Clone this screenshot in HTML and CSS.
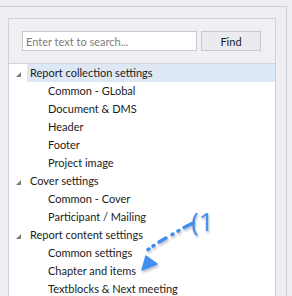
FILE: index.html
```html
<!DOCTYPE html>
<html lang="en">
<head>
    <meta charset="UTF-8">
    <title>Report settings</title>
    <link rel="stylesheet" href="styles.css">
</head>
<body>
    <div class="frame">
        <div class="panel">
            <div class="search-row">
                <input type="text" class="search" placeholder="Enter text to search...">
                <button class="find">Find</button>
            </div>
            <ul class="tree">
                <li class="node selected"><span class="toggle"></span><span class="label">Report collection settings</span></li>
                <li class="leaf">Common - GLobal</li>
                <li class="leaf">Document &amp; DMS</li>
                <li class="leaf">Header</li>
                <li class="leaf">Footer</li>
                <li class="leaf">Project image</li>
                <li class="node"><span class="toggle"></span><span class="label">Cover settings</span></li>
                <li class="leaf">Common - Cover</li>
                <li class="leaf">Participant / Mailing</li>
                <li class="node"><span class="toggle"></span><span class="label">Report content settings</span></li>
                <li class="leaf">Common settings</li>
                <li class="leaf">Chapter and items</li>
                <li class="leaf">Textblocks &amp; Next meeting</li>
            </ul>
        </div>
    </div>

    <!-- callout arrow -->
    <div class="callout">
        <svg width="100" height="80" viewBox="0 0 100 80">
            <defs>
                <filter id="shade" x="-20%" y="-20%" width="140%" height="140%">
                    <feDropShadow dx="1" dy="2" stdDeviation="1.2" flood-color="#000" flood-opacity="0.25"/>
                </filter>
            </defs>
            <g filter="url(#shade)" stroke="#3f8ff0" stroke-width="3.5" stroke-linecap="round" fill="none">
                <path d="M63 23 L54 27.5"/>
                <path d="M49 30.5 L48 31.1"/>
                <path d="M43 34 L42 34.6"/>
                <path d="M36 38 L29 42"/>
                <path d="M24 45.5 L23 46.1"/>
                <path d="M19 49 L18 49.6"/>
                <path d="M16 56 L12 70 L27 64 Z" fill="#3f8ff0" stroke-width="1.5" stroke-linejoin="round"/>
            </g>
        </svg>
        <span class="tag">(1</span>
    </div>
</body>
</html>
```

FILE: styles.css
```css
body {
    margin: 0;
    background-color: #efeef3;
    font-family: Lato, "Noto Sans", Arial, sans-serif;
    font-size: 11px;
    color: #1b1b1b;
    overflow: hidden;
    height: 296px;
}
.frame {
    margin-top: 6px;
    width: 287px;
    height: 300px;
    border-top: 1px solid #cfcfd8;
    border-right: 1px solid #cfcfd8;
    padding: 11px 0 0 8px;
    box-sizing: border-box;
}
.panel {
    width: 268px;
    height: 290px;
    border: 1px solid #cfcfd8;
    background-color: #f0eff4;
    box-sizing: border-box;
}
.search-row {
    display: flex;
    gap: 4px;
    padding: 12px 0 12px 13px;
}
.search {
    width: 175px;
    height: 20px;
    box-sizing: border-box;
    border: 1px solid #c9c9d2;
    background: #fff;
    padding: 0 3px;
    font-family: inherit;
    font-size: 11px;
    outline: none;
}
.search::placeholder {
    color: #7c7c7c;
}
.find {
    width: 60px;
    height: 20px;
    box-sizing: border-box;
    border: 1px solid #c9c9d2;
    background-color: #ebeaef;
    font-family: inherit;
    font-size: 11px;
    color: #1b1b1b;
    padding: 0;
}
.tree {
    list-style: none;
    margin: 0;
    padding: 0;
    border-top: 1px solid #d3d3dc;
    background: #fff;
    height: 240px;
}
.tree li {
    height: 18px;
    line-height: 18px;
    white-space: nowrap;
}
.node {
    display: flex;
}
.toggle {
    width: 18px;
    position: relative;
}
.toggle::after {
    content: "";
    position: absolute;
    left: 7px;
    top: 8px;
    border-style: solid;
    border-width: 0 0 5px 5px;
    border-color: transparent transparent #7c7c7c transparent;
}
.label {
    flex: 1;
    padding-left: 3px;
}
.selected .label {
    background-color: #dee8f5;
}
.leaf {
    padding-left: 39px;
}
.callout {
    position: absolute;
    left: 130px;
    top: 200px;
}
.callout svg {
    display: block;
}
.tag {
    position: absolute;
    left: 61px;
    top: 6px;
    font-family: "Open Sans", Arial, sans-serif;
    font-size: 26px;
    line-height: 30px;
    color: #3f8ff0;
    text-shadow: 1px 2px 2px rgba(0, 0, 0, 0.25);
}
```
